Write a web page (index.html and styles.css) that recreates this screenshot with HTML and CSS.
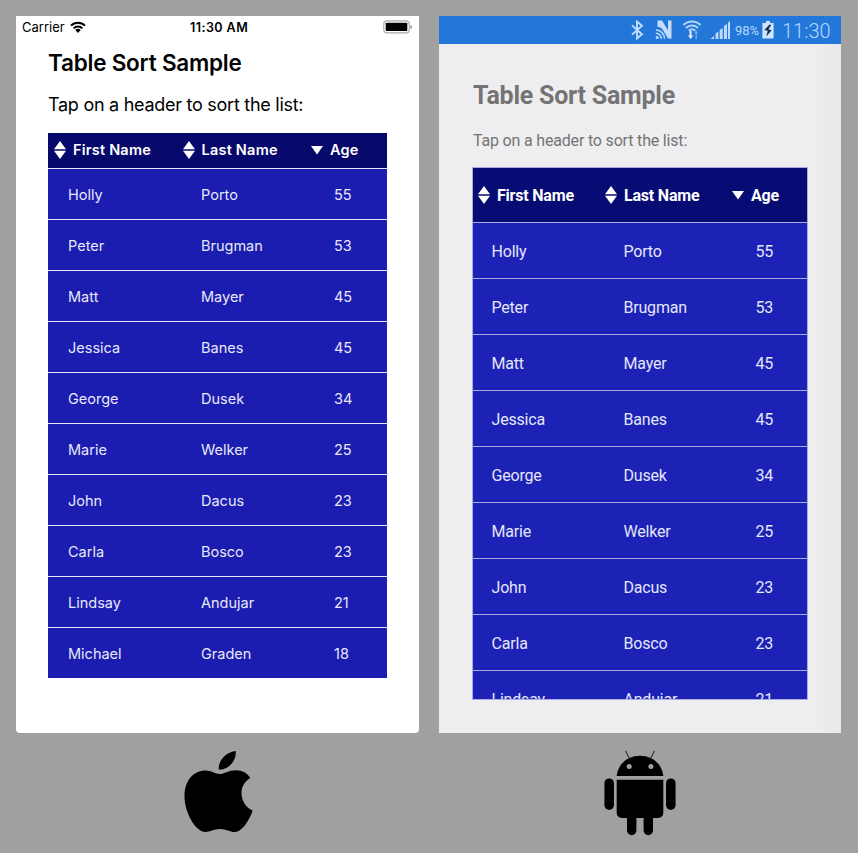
FILE: index.html
```html
<!DOCTYPE html>
<html lang="en">
<head>
<meta charset="utf-8">
<title>Table Sort Sample</title>
<link rel="stylesheet" href="styles.css">
</head>
<body>
<svg class="defs" width="0" height="0">
  <symbol id="both" viewBox="0 0 12 18"><path d="M6 0l6 8.300H0zM6 18l6-8.300H0z" fill="#fff"/></symbol>
  <symbol id="down" viewBox="0 0 12 18"><path d="M0 5h12L6 13.500z" fill="#fff"/></symbol>
</svg>
<main class="devices">
  <section class="device">
    <div class="screen ios">
      <header class="status">
        <span class="carrier">Carrier</span>
        <svg class="wifi" width="16" height="12" viewBox="0 0 16 12"><g fill="none" stroke="#000" stroke-width="2"><path d="M1 4.6a10 10 0 0 1 14 0"/><path d="M3.6 7.4a6.2 6.2 0 0 1 8.8 0"/></g><path d="M5.3 9.1a3.8 3.8 0 0 1 5.4 0L8 11.9z"/></svg>
        <span class="time">11:30 AM</span>
        <svg class="battery" width="30" height="14" viewBox="0 0 30 14"><rect x=".8" y=".9" width="25.4" height="12" rx="3" fill="#fff" stroke="#aaa" stroke-width="1.1"/><rect x="2.7" y="2.8" width="21.6" height="8.2" rx=".8"/><path d="M27.4 5v4q1.6-.5 1.6-2t-1.6-2" fill="#888"/></svg>
      </header>
      <h1>Table Sort Sample</h1>
      <p>Tap on a header to sort the list:</p>
      <div class="table">
        <div class="head"><span><svg><use href="#both"/></svg>First Name</span><span><svg><use href="#both"/></svg>Last Name</span><span><svg><use href="#down"/></svg>Age</span></div>
        <div class="row"><span>Holly</span><span>Porto</span><span>55</span></div>
        <div class="row"><span>Peter</span><span>Brugman</span><span>53</span></div>
        <div class="row"><span>Matt</span><span>Mayer</span><span>45</span></div>
        <div class="row"><span>Jessica</span><span>Banes</span><span>45</span></div>
        <div class="row"><span>George</span><span>Dusek</span><span>34</span></div>
        <div class="row"><span>Marie</span><span>Welker</span><span>25</span></div>
        <div class="row"><span>John</span><span>Dacus</span><span>23</span></div>
        <div class="row"><span>Carla</span><span>Bosco</span><span>23</span></div>
        <div class="row"><span>Lindsay</span><span>Andujar</span><span>21</span></div>
        <div class="row"><span>Michael</span><span>Graden</span><span>18</span></div>
      </div>
    </div>
    <svg class="logo apple" width="70" height="83" viewBox="0 0 70 83"><path d="M51.7 1C52.8 11 44 20.3 34.8 19.5C34 10.7 42 1.900 51.700 1Z"/><path d="M35.500 24C40 24 44.500 20.200 52 20.200C58.500 20.200 63.500 23 66.200 28C60.500 31.500 57.500 37 57.500 43C57.500 51 62 57.500 68.700 60.500C66.500 67 59.500 81.500 51 82C46 82.200 42.500 79 36 79C29.500 79 26.500 82 21.500 82C12 82 .5 63.500 .5 46C.5 30 10 20.500 21.500 20.500C27.500 20.500 31.500 24 35.500 24Z"/></svg>
  </section>
  <section class="device">
    <div class="screen android">
      <header class="status">
        <svg class="icons" width="106" height="22" viewBox="0 0 106 22">
          <path d="M2 6.400l10 8.800-5 4.300V2.500L12 6.800 2 15.600" fill="none" stroke="#c2ddff" stroke-width="1.900"/>
          <path d="M27.500 1.500h4.500l6 10V1.500h3.500v18H38l-5-8.500-2-2.300-3.500-1z" fill="#c2ddff"/>
          <circle cx="27.200" cy="18.600" r="1.500" fill="#c2ddff"/>
          <path d="M25.800 11a8.500 8.500 0 0 1 8.700 8.700M25.800 14.200a5.400 5.400 0 0 1 5.500 5.500" fill="none" stroke="#c2ddff" stroke-width="1.600"/>
          <g fill="none" stroke="#b5d5fb" stroke-width="1.900"><path d="M53.500 6a12 12 0 0 1 17 0M56 9a8.600 8.600 0 0 1 12 0M58.700 11.800a5 5 0 0 1 6.600 0"/></g>
          <path d="M59.600 12h2v4.500h1.700l-2.700 3.600-2.700-3.600h1.700z" fill="#e3f0ff"/><path d="M65.500 20v-6h-1.400l2.100-2.600 2.100 2.600h-1.400v6z" fill="#75acee"/>
          <path d="M80.500 20l3.500-3v3zM85.500 14.500l2.900-2V20h-2.900zM89.700 11l3-2v11h-3zM94 7l3-2v15h-3zM98 3.500l2-1.500v18h-2z" fill="#bddbff"/>
        </svg>
        <span class="percent">98%</span>
        <svg class="charge" width="12" height="18" viewBox="0 0 12 18"><path d="M4 0h4v2h3.600v15.600H.4V2H4z" fill="#cfe4ff"/><path d="M7.500 3.500L2.300 9l3.500.8L4.200 15.500 9.700 9.200 6.300 8.300l3-4.300z" fill="#122c55"/></svg>
        <span class="time">11:30</span>
      </header>
      <h1>Table Sort Sample</h1>
      <p>Tap on a header to sort the list:</p>
      <div class="table">
        <div class="head"><span><svg><use href="#both"/></svg>First Name</span><span><svg><use href="#both"/></svg>Last Name</span><span><svg><use href="#down"/></svg>Age</span></div>
        <div class="row"><span>Holly</span><span>Porto</span><span>55</span></div>
        <div class="row"><span>Peter</span><span>Brugman</span><span>53</span></div>
        <div class="row"><span>Matt</span><span>Mayer</span><span>45</span></div>
        <div class="row"><span>Jessica</span><span>Banes</span><span>45</span></div>
        <div class="row"><span>George</span><span>Dusek</span><span>34</span></div>
        <div class="row"><span>Marie</span><span>Welker</span><span>25</span></div>
        <div class="row"><span>John</span><span>Dacus</span><span>23</span></div>
        <div class="row"><span>Carla</span><span>Bosco</span><span>23</span></div>
        <div class="row"><span>Lindsay</span><span>Andujar</span><span>21</span></div>
      </div>
    </div>
    <svg class="logo robot" width="72" height="86" viewBox="0 0 72 86"><g stroke="#333" stroke-width="1.200"><path d="M21.500 1l4 7.500M50.500 1l-4 7.500"/></g><path d="M12.700 26C14 13.500 24 5.700 36 5.700S58 13.500 59.300 26z"/><circle cx="25.200" cy="16.600" r="2.500" fill="#a0a0a0"/><circle cx="46.900" cy="16.600" r="2.500" fill="#a0a0a0"/><path d="M12.700 29.700h46.600V63a5 5 0 0 1-5 5H49v12.500a4.700 4.700 0 0 1-9.400 0V68h-7.200v12.500a4.700 4.700 0 0 1-9.400 0V68h-5.300a5 5 0 0 1-5-5z"/><rect x=".4" y="28.400" width="9.600" height="31.500" rx="4.800"/><rect x="62" y="28.400" width="9.600" height="31.500" rx="4.800"/></svg>
  </section>
</main>
</body>
</html>
```
FILE: styles.css
```css
* { box-sizing: border-box; }
body { margin: 0; background: #a0a0a0; height: 853px; overflow: hidden; }
.defs { position: absolute; }
.devices { display: flex; gap: 20px; padding: 16px 0 0 16px; }
.device { display: flex; flex-direction: column; }
.screen { height: 717px; overflow: hidden; }
h1, p { margin: 0; white-space: nowrap; }
.logo { display: block; }
.status { display: flex; align-items: center; }
.row, .head { display: grid; align-items: center; white-space: nowrap; }
.head span { display: flex; align-items: center; }
.head svg { width: 12px; height: 18px; flex: none; }

.ios { width: 403px; background: #fff; border-radius: 0 0 4px 4px; font-family: Inter, sans-serif; color: #000; }
.ios .status { height: 22px; padding: 0 6px; font-size: 13px; }
.ios .carrier { width: 48px; }
.ios .wifi { margin-right: 104px; }
.ios .time { font-weight: 600; font-size: 12.500px; letter-spacing: 0.450px; width: 62px; white-space: nowrap; }
.ios .battery { margin-left: auto; }
.ios h1 { margin: 8px 0 0 32px; font-size: 22.500px; line-height: 34px; font-weight: 600; letter-spacing: -0.220px; }
.ios p { margin: 12px 0 0 32px; font-size: 18px; line-height: 26px; letter-spacing: -0.270px; }
.ios .table { width: 339px; margin: 15px 0 0 32px; color: #e8e8fa; font-size: 14.500px; }
.ios .head { height: 34.500px; background: #06086b; color: #fff; font-weight: 600; letter-spacing: 0.220px; grid-template-columns: 128.500px 128.500px 1fr; padding: 0 0 1px 6px; }
.ios .head svg { margin-right: 7px; }
.ios .row { height: 51.050px; border-top: 1.200px solid #e4e4f8; background: #1b1cb0; grid-template-columns: 133px 133px 1fr; padding: 1px 0 0 20px; }

.android { width: 402px; background: linear-gradient(90deg, #eeeef0 94%, #e7e8ea 100%); font-family: Roboto, sans-serif; color: #747474; }
.android .status { height: 28px; background: #2377d8; color: #b8d7ff; padding-left: 191px; }
.android .percent { width: 25px; margin-right: 2px; font-size: 13px; }
.android .icons { margin-right: -1px; flex: none; }
.android .charge { margin-right: 8px; flex: none; }
.android .time { font-size: 20px; font-weight: 300; line-height: 28px; padding-top: 2px; }
.android h1 { margin: 35px 0 0 34px; font-size: 25px; line-height: 34px; font-weight: 700; letter-spacing: -0.240px; }
.android p { margin: 16px 0 0 34px; font-size: 16px; line-height: 24px; letter-spacing: -0.180px; }
.android .table { width: 336px; height: 533px; margin: 14px 0 0 33px; border: 1px solid #a8aae0; overflow: hidden; color: #e5e6fa; font-size: 16px; letter-spacing: -0.200px; }
.android .head { height: 53.500px; background: #070c75; color: #fff; font-weight: 700; grid-template-columns: 127px 127px 1fr; padding: 1px 0 0 5px; }
.android .head svg { margin-right: 7px; }
.android .row { height: 56px; border-top: 1.500px solid #a8aae0; background: #1b22b5; grid-template-columns: 132px 132px 1fr; padding: 2px 0 0 18.500px; }

.apple { margin: 17px 0 0 168px; }
.robot { margin: 17px 0 0 165px; }
```
